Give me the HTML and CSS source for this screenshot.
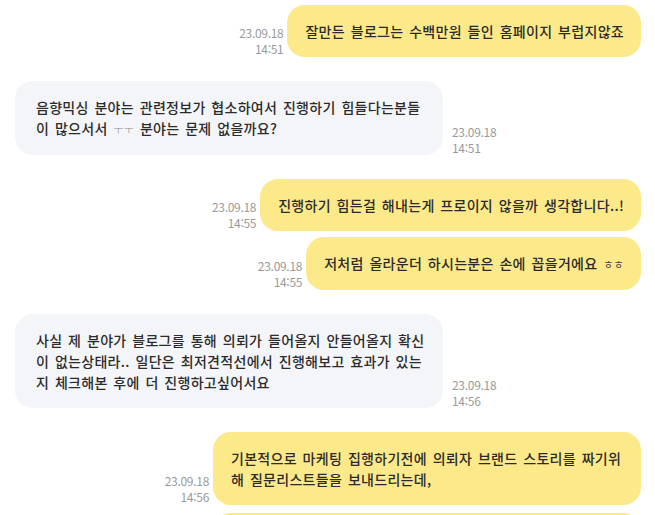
FILE: index.html
```html
<!DOCTYPE html>
<html lang="ko">

<head>
    <meta charset="UTF-8">
    <meta name="viewport" content="width=device-width, initial-scale=1.0">
    <title>채팅</title>
    <link rel="stylesheet" href="styles.css">
</head>

<body>
    <div class="chat">
        <!-- 내 메시지 -->
        <div class="row me">
            <div class="time">23.09.18<br>14:51</div>
            <div class="bubble">잘만든 블로그는 수백만원 들인 홈페이지 부럽지않죠</div>
        </div>

        <!-- 상대 메시지 -->
        <div class="row you">
            <div class="bubble wide">음향믹싱 분야는 관련정보가 협소하여서 진행하기 힘들다는분들<br>이 많으서서 <span class="cry">ㅜㅜ</span> 분야는 문제 없을까요?</div>
            <div class="time">23.09.18<br>14:51</div>
        </div>

        <div class="row me">
            <div class="time">23.09.18<br>14:55</div>
            <div class="bubble">진행하기 힘든걸 해내는게 프로이지 않을까 생각합니다..!</div>
        </div>
        <div class="row me same">
            <div class="time">23.09.18<br>14:55</div>
            <div class="bubble">저처럼 올라운더 하시는분은 손에 꼽을거에요 <span class="laugh">ㅎㅎ</span></div>
        </div>

        <div class="row you">
            <div class="bubble wide">사실 제 분야가 블로그를 통해 의뢰가 들어올지 안들어올지 확신<br>이 없는상태라.. 일단은 최저견적선에서 진행해보고 효과가 있는<br>지 체크해본 후에 더 진행하고싶어서요</div>
            <div class="time">23.09.18<br>14:56</div>
        </div>

        <div class="row me">
            <div class="time">23.09.18<br>14:56</div>
            <div class="bubble wide">기본적으로 마케팅 집행하기전에 의뢰자 브랜드 스토리를 짜기위<br>해 질문리스트들을 보내드리는데,</div>
        </div>
        <!-- 다음 메시지 (잘림) -->
        <div class="row me same next">
            <div class="bubble wide">&nbsp;</div>
        </div>
    </div>
</body>

</html>
```

FILE: styles.css
```css
* {
    margin: 0;
    padding: 0;
    box-sizing: border-box;
}

body {
    background: #ffffff;
    font-family: "Noto Sans CJK KR", "Noto Sans", sans-serif;
    color: #2b2b2b;
    overflow: hidden;
}

.chat {
    display: flex;
    flex-direction: column;
    padding: 5px 14px 0 15px;
}

.row {
    display: flex;
    align-items: flex-end;
    margin-top: 24px;
}

.row:first-child {
    margin-top: 0;
}

.row.same {
    margin-top: 6px;
}

.row.next {
    margin-top: 8px;
}

.me {
    justify-content: flex-end;
}

.bubble {
    font-size: 14px;
    font-weight: 500;
    line-height: 21px;
    letter-spacing: 0.3px;
    word-spacing: 1.5px;
    white-space: nowrap;
    padding: 16px 17px 15px 18px;
    border-radius: 18px;
}

.me .bubble {
    background: #fce98a;
}

.you .bubble {
    background: #f4f5f8;
    padding-left: 21px;
}

.bubble.wide {
    width: 428px;
}

.cry {
    font-size: 11px;
    font-weight: 300;
    color: #8a8a8a;
}

.laugh {
    font-size: 11px;
    font-weight: 400;
    color: #444;
}

.time {
    font-size: 12px;
    line-height: 16px;
    letter-spacing: -0.3px;
    color: #9a9a9a;
}

.me .time {
    text-align: right;
    margin-right: 4px;
}

.you .time {
    margin-left: 9px;
    margin-bottom: -1px;
}
```
